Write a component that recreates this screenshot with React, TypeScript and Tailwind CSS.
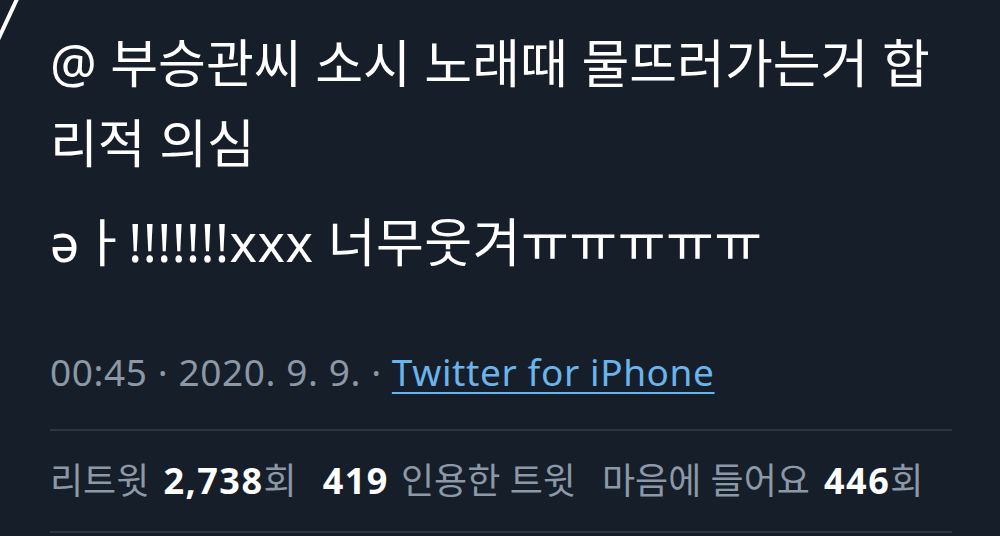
export default function App() {
  const font = {
    fontFamily: '"Noto Sans", "Noto Sans CJK KR", sans-serif',
  };

  return (
    <div
      className="relative w-[1000px] h-[536px] overflow-hidden bg-[#161e2a] text-white"
      style={font}
    >
      {/* corner of the card above */}
      <div className="absolute -left-[28px] -top-[20px] w-[40px] h-[60px] border-r-[4px] border-white rotate-[25deg]" />

      <div className="pl-[50px] pr-[48px] pt-[23px]">
        <div className="text-[52px] leading-[80px]">
          <div className="whitespace-nowrap">@ 부승관씨 소시 노래때 물뜨러가는거 합</div>
          <div className="whitespace-nowrap">리적 의심</div>
        </div>

        <div className="mt-[27px] text-[52px] leading-[64px] tracking-[0.5px] whitespace-nowrap">
          əㅏ!!!!!!!xxx 너무웃겨ㅠㅠㅠㅠㅠ
        </div>

        <div className="mt-[74px] flex items-center text-[37px] leading-[48px] tracking-[0.6px] text-[#8b98a5] whitespace-nowrap">
          <span>00:45 · 2020. 9. 9. ·</span>
          <span className="ml-[10px] text-[#6ab4ec] underline decoration-2 underline-offset-[6px]">
            Twitter for iPhone
          </span>
        </div>

        <div className="mt-[33px] border-t-2 border-[#2c3642]" />

        <div className="flex items-center h-[100px] text-[36px] text-[#8b98a5] whitespace-nowrap">
          <span>리트윗</span>
          <span className="ml-[14px] font-bold tracking-[1.5px] text-white">2,738</span>
          <span>회</span>
          <span className="ml-[26px] font-bold tracking-[1.5px] text-white">419</span>
          <span className="ml-[12px]">인용한 트윗</span>
          <span className="ml-[26px]">마음에 들어요</span>
          <span className="ml-[14px] font-bold tracking-[1.5px] text-white">446</span>
          <span>회</span>
        </div>

        <div className="border-t-2 border-[#2c3642]" />
      </div>
    </div>
  );
}
